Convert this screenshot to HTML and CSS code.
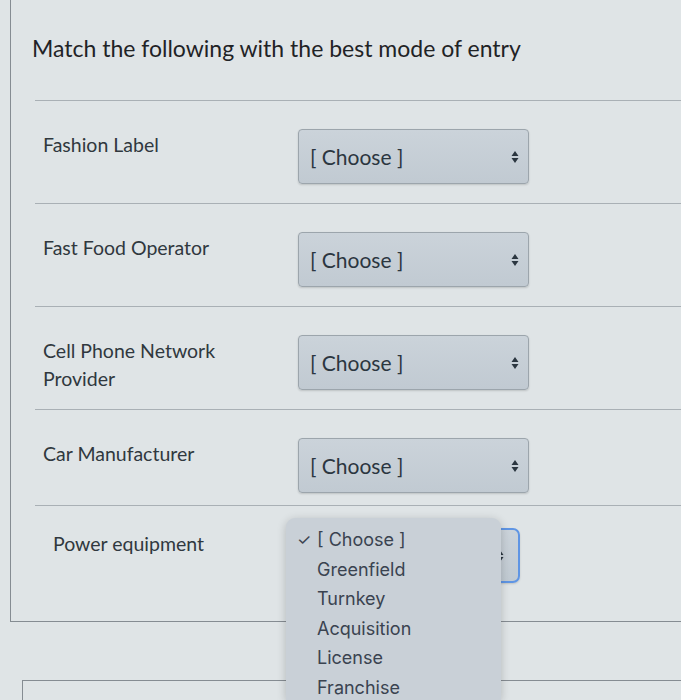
FILE: index.html
```html
<!DOCTYPE html>
<html>
<head>
	<title>Quiz - Matching</title>
	<link rel="stylesheet" href="styles.css">
</head>
<body class="page">
	<div class="question">
		<h1 class="questionText">Match the following with the best mode of entry</h1>
		<div class="answers">
			<div class="answerRow">
				<div class="answerLabel">Fashion Label</div>
				<div class="choice">
					<span>[ Choose ]</span>
					<svg class="arrows" width="8" height="14" viewBox="0 0 8 14"><path d="M4 1 L7.5 6 L0.5 6 Z M4 13 L7.5 8 L0.5 8 Z"/></svg>
				</div>
			</div>
			<div class="answerRow">
				<div class="answerLabel">Fast Food Operator</div>
				<div class="choice">
					<span>[ Choose ]</span>
					<svg class="arrows" width="8" height="14" viewBox="0 0 8 14"><path d="M4 1 L7.5 6 L0.5 6 Z M4 13 L7.5 8 L0.5 8 Z"/></svg>
				</div>
			</div>
			<div class="answerRow">
				<div class="answerLabel">Cell Phone Network<br/>Provider</div>
				<div class="choice">
					<span>[ Choose ]</span>
					<svg class="arrows" width="8" height="14" viewBox="0 0 8 14"><path d="M4 1 L7.5 6 L0.5 6 Z M4 13 L7.5 8 L0.5 8 Z"/></svg>
				</div>
			</div>
			<div class="answerRow short">
				<div class="answerLabel">Car Manufacturer</div>
				<div class="choice">
					<span>[ Choose ]</span>
					<svg class="arrows" width="8" height="14" viewBox="0 0 8 14"><path d="M4 1 L7.5 6 L0.5 6 Z M4 13 L7.5 8 L0.5 8 Z"/></svg>
				</div>
			</div>
			<div class="answerRow last">
				<div class="answerLabel">Power equipment</div>
				<div class="choice focused">
					<span class="hiddenValue">[ Choose ]</span>
					<svg class="arrows" width="8" height="14" viewBox="0 0 8 14"><path d="M4 1 L7.5 6 L0.5 6 Z M4 13 L7.5 8 L0.5 8 Z"/></svg>
				</div>
				<ul class="optionMenu">
					<li class="selected"><span class="check">&#10003;</span>[ Choose ]</li>
					<li>Greenfield</li>
					<li>Turnkey</li>
					<li>Acquisition</li>
					<li>License</li>
					<li>Franchise</li>
				</ul>
			</div>
		</div>
	</div>
	<div class="question next"></div>
</body>
</html>
```

FILE: styles.css
```css
.page{
	margin:0;
	height:700px;
	background:#dfe4e6;
	font-family:Lato, "Liberation Sans", sans-serif;
	overflow:hidden;
}
.question{
	margin-left:10px;
	border-left:1px solid #858c92;
	border-bottom:1px solid #858c92;
	padding-left:21px;
}
.questionText{
	margin:0;
	padding-top:33px;
	height:67px;
	font-size:23px;
	font-weight:normal;
	color:#1f2326;
	line-height:30px;
}
.answers{
	margin-left:3px;
}
.answerRow{
	position:relative;
	display:flex;
	align-items:flex-start;
	border-top:1px solid #a9b0b5;
	padding:28px 0 20px 0;
	height:54px;
}
.answerRow.short{
	padding-bottom:13px;
}
.answerRow.last{
	padding-top:22px;
	height:93px;
	padding-bottom:0;
}
.answerLabel{
	width:255px;
	padding-left:8px;
	padding-top:2px;
	font-size:19.5px;
	line-height:28px;
	color:#30383e;
	flex-shrink:0;
}
.answerRow.last .answerLabel{
	padding-left:18px;
	width:245px;
}
.choice{
	box-sizing:border-box;
	width:231px;
	height:55px;
	display:flex;
	align-items:center;
	justify-content:space-between;
	padding:0 9px 0 11px;
	background:linear-gradient(#cbd3da, #c1cad2);
	border:1px solid #9ca5ac;
	border-radius:4px;
	box-shadow:0 1px 2px rgba(0,0,0,0.15);
	font-size:21px;
	color:#2b3640;
}
.arrows{
	fill:#2b3640;
}
.choice.focused{
	width:222px;
	border:2px solid #5f95e4;
	border-radius:7px;
	padding-right:14px;
}
.hiddenValue{
	visibility:hidden;
}
.optionMenu{
	position:absolute;
	left:251px;
	top:12px;
	width:215px;
	height:182px;
	margin:0;
	padding:7px 0 0 0;
	list-style:none;
	background:#c9d0d7;
	border-radius:9px 9px 0 0;
	box-shadow:0 2px 10px rgba(0,0,0,0.2);
	font-family:Inter, "Open Sans", sans-serif;
	font-size:18px;
	color:#3a4350;
	overflow:hidden;
	box-sizing:border-box;
}
.optionMenu li{
	height:29.6px;
	line-height:29.6px;
	padding-left:31px;
	position:relative;
}
.check{
	position:absolute;
	left:11px;
	font-size:16px;
}
.next{
	margin-top:58px;
	margin-left:22px;
	border-top:1px solid #858c92;
	border-bottom:none;
	height:19px;
}
```
